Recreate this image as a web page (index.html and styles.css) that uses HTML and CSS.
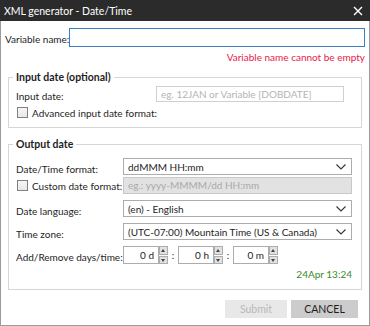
FILE: index.html
```html
<!DOCTYPE html>
<html lang="en">
<head>
  <meta charset="UTF-8" />
  <title>XML generator - Date/Time</title>
  <link rel="stylesheet" href="styles.css">
</head>
<body>
  <div class="window">
    <div class="titlebar">
      <span>XML generator - Date/Time</span>
      <svg class="close" width="10" height="10" viewBox="0 0 10 10">
        <path d="M1 1 L9 9 M9 1 L1 9" stroke="#fff" stroke-width="1.4" fill="none"/>
      </svg>
    </div>

    <div class="content">
      <div class="var-row">
        <label>Variable name:</label>
        <input type="text" class="var-input" />
      </div>
      <div class="error">Variable name cannot be empty</div>

      <fieldset class="group input-group">
        <legend>Input date (optional)</legend>
        <div class="row">
          <label class="lbl lbl-wide">Input date:</label>
          <div class="field field-disabled-light">eg. 12JAN or Variable [DOBDATE]</div>
        </div>
        <div class="check-row">
          <span class="checkbox"></span>
          <span>Advanced input date format:</span>
        </div>
      </fieldset>

      <fieldset class="group output-group">
        <legend>Output date</legend>
        <div class="row">
          <label class="lbl">Date/Time format:</label>
          <div class="combo">ddMMM HH:mm
            <svg class="chev" width="10" height="6" viewBox="0 0 10 6"><path d="M0.5 0.5 L5 5 L9.5 0.5" stroke="#333" stroke-width="1.1" fill="none"/></svg>
          </div>
        </div>
        <div class="row row-tight">
          <label class="lbl check-lbl"><span class="checkbox"></span>Custom date format:</label>
          <div class="field field-disabled">eg.: yyyy-MMMM/dd HH:mm</div>
        </div>
        <div class="row">
          <label class="lbl">Date language:</label>
          <div class="combo">(en) - English
            <svg class="chev" width="10" height="6" viewBox="0 0 10 6"><path d="M0.5 0.5 L5 5 L9.5 0.5" stroke="#333" stroke-width="1.1" fill="none"/></svg>
          </div>
        </div>
        <div class="row">
          <label class="lbl">Time zone:</label>
          <div class="combo">(UTC-07:00) Mountain Time (US &amp; Canada)
            <svg class="chev" width="10" height="6" viewBox="0 0 10 6"><path d="M0.5 0.5 L5 5 L9.5 0.5" stroke="#333" stroke-width="1.1" fill="none"/></svg>
          </div>
        </div>
        <div class="row row-spin">
          <label class="lbl">Add/Remove days/time:</label>
          <div class="spins">
            <div class="spin"><span class="spin-val">0 d</span><span class="spin-btns"><span class="up"></span><span class="down"></span></span></div>
            <span class="colon">:</span>
            <div class="spin"><span class="spin-val">0 h</span><span class="spin-btns"><span class="up"></span><span class="down"></span></span></div>
            <span class="colon">:</span>
            <div class="spin"><span class="spin-val">0 m</span><span class="spin-btns"><span class="up"></span><span class="down"></span></span></div>
          </div>
        </div>
        <div class="result">24Apr 13:24</div>
      </fieldset>

      <div class="buttons">
        <button class="btn btn-submit" disabled>Submit</button>
        <button class="btn btn-cancel">CANCEL</button>
      </div>
    </div>
  </div>
</body>
</html>
```

FILE: styles.css
```css
* {
  box-sizing: border-box;
}

body {
  margin: 0;
  background: #fff;
  font-family: Lato, "Liberation Sans", sans-serif;
  font-size: 10px;
  color: #1e1e1e;
  white-space: nowrap;
}

.window {
  width: 370px;
  height: 326px;
  border: 1px solid #9b9b9b;
  border-top: none;
  display: flex;
  flex-direction: column;
}

.titlebar {
  height: 21px;
  flex: none;
  background: #2b2b2b;
  color: #fff;
  display: flex;
  align-items: center;
  justify-content: space-between;
  padding: 0 4px;
  font-size: 10.5px;
  margin: 0 -1px;
}

.close {
  margin-right: 3px;
}

.content {
  padding: 7px 4px 0 4px;
}

.var-row {
  display: flex;
  align-items: center;
  height: 19px;
}

.var-row label {
  width: 64px;
  flex: none;
  padding-top: 2px;
}

.var-input {
  flex: 1;
  min-width: 0;
  height: 19px;
  border: 1px solid #3a7fc4;
  outline: none;
  margin: 0;
}

.error {
  text-align: right;
  color: #e8204a;
  line-height: 14px;
  margin-top: 3px;
}

.group {
  margin: 0 3px;
  padding: 0 9px 0 7px;
  border: 1px solid #d6d6d6;
  min-width: 0;
}

.group legend {
  font-weight: bold;
  font-size: 10.5px;
  padding: 0 3px;
  margin-left: -3px;
  line-height: 16px;
}

.input-group {
  margin-top: 5px;
  padding-bottom: 9px;
  padding-right: 17px;
}

.row {
  display: flex;
  align-items: center;
  height: 17px;
  margin-top: 2px;
}

.input-group .row {
  height: 16px;
  margin-top: 1px;
}

.output-group {
  margin-top: 8px;
  padding-bottom: 8px;
}

.output-group .row {
  margin-top: 6px;
}

.output-group .row:first-of-type {
  margin-top: 6px;
}

.output-group .row-tight {
  margin-top: 2px;
}

.output-group .row-spin {
  height: 18px;
}

.lbl {
  width: 107px;
  flex: none;
  padding-top: 4px;
}

.lbl-wide {
  width: 140px;
}

.check-lbl {
  padding-top: 0;
  display: flex;
  align-items: center;
}

.check-row {
  display: flex;
  align-items: center;
  margin-top: 5px;
  height: 11px;
}

.checkbox {
  display: inline-block;
  width: 11px;
  height: 11px;
  border: 1px solid #808080;
  background: linear-gradient(#f6f6f6, #e8e8e8);
  margin: 0 4px 0 1px;
  flex: none;
}

.field {
  flex: 1;
  min-width: 0;
  height: 100%;
  line-height: 15px;
  padding: 0 4px;
  overflow: hidden;
}

.field-disabled-light {
  border: 1px solid #d0d0d0;
  background: #fff;
  color: #b4b4b4;
}

.field-disabled {
  border: 1px solid #c8c8c8;
  background: #e2e2e2;
  color: #a9a9a9;
}

.combo {
  flex: 1;
  min-width: 0;
  height: 17px;
  border: 1px solid #acacac;
  background: #fff;
  display: flex;
  align-items: center;
  justify-content: space-between;
  padding: 0 5px 0 4px;
}

.chev {
  flex: none;
}

.spins {
  display: flex;
  align-items: center;
  height: 18px;
}

.spin {
  display: flex;
  height: 18px;
  width: 45px;
}

.spin-val {
  flex: 1;
  border: 1px solid #acacac;
  text-align: right;
  padding-right: 4px;
  line-height: 16px;
}

.spin-btns {
  width: 9px;
  display: flex;
  flex-direction: column;
  gap: 1px;
}

.spin-btns span {
  flex: 1;
  background: #e1e1e1;
  border: 1px solid #adadad;
  position: relative;
}

.spin-btns .up::after,
.spin-btns .down::after {
  content: "";
  position: absolute;
  left: 1px;
  top: 2px;
  width: 0;
  height: 0;
  border-left: 2.5px solid transparent;
  border-right: 2.5px solid transparent;
}

.spin-btns .up::after {
  border-bottom: 3px solid #444;
}

.spin-btns .down::after {
  border-top: 3px solid #444;
}

.colon {
  width: 10px;
  text-align: center;
}

.result {
  text-align: right;
  color: #3a8a2a;
  margin-top: 3px;
  line-height: 14px;
}

.buttons {
  display: flex;
  justify-content: flex-end;
  gap: 4px;
  margin-top: 10px;
  padding-right: 7px;
}

.btn {
  height: 18px;
  font-family: inherit;
  font-size: 10.5px;
  border: none;
  padding: 0;
}

.btn-submit {
  width: 62px;
  background: #e8e8e8;
  color: #b9b9b9;
}

.btn-cancel {
  width: 67px;
  background: #cccccc;
  color: #1e1e1e;
}
```
